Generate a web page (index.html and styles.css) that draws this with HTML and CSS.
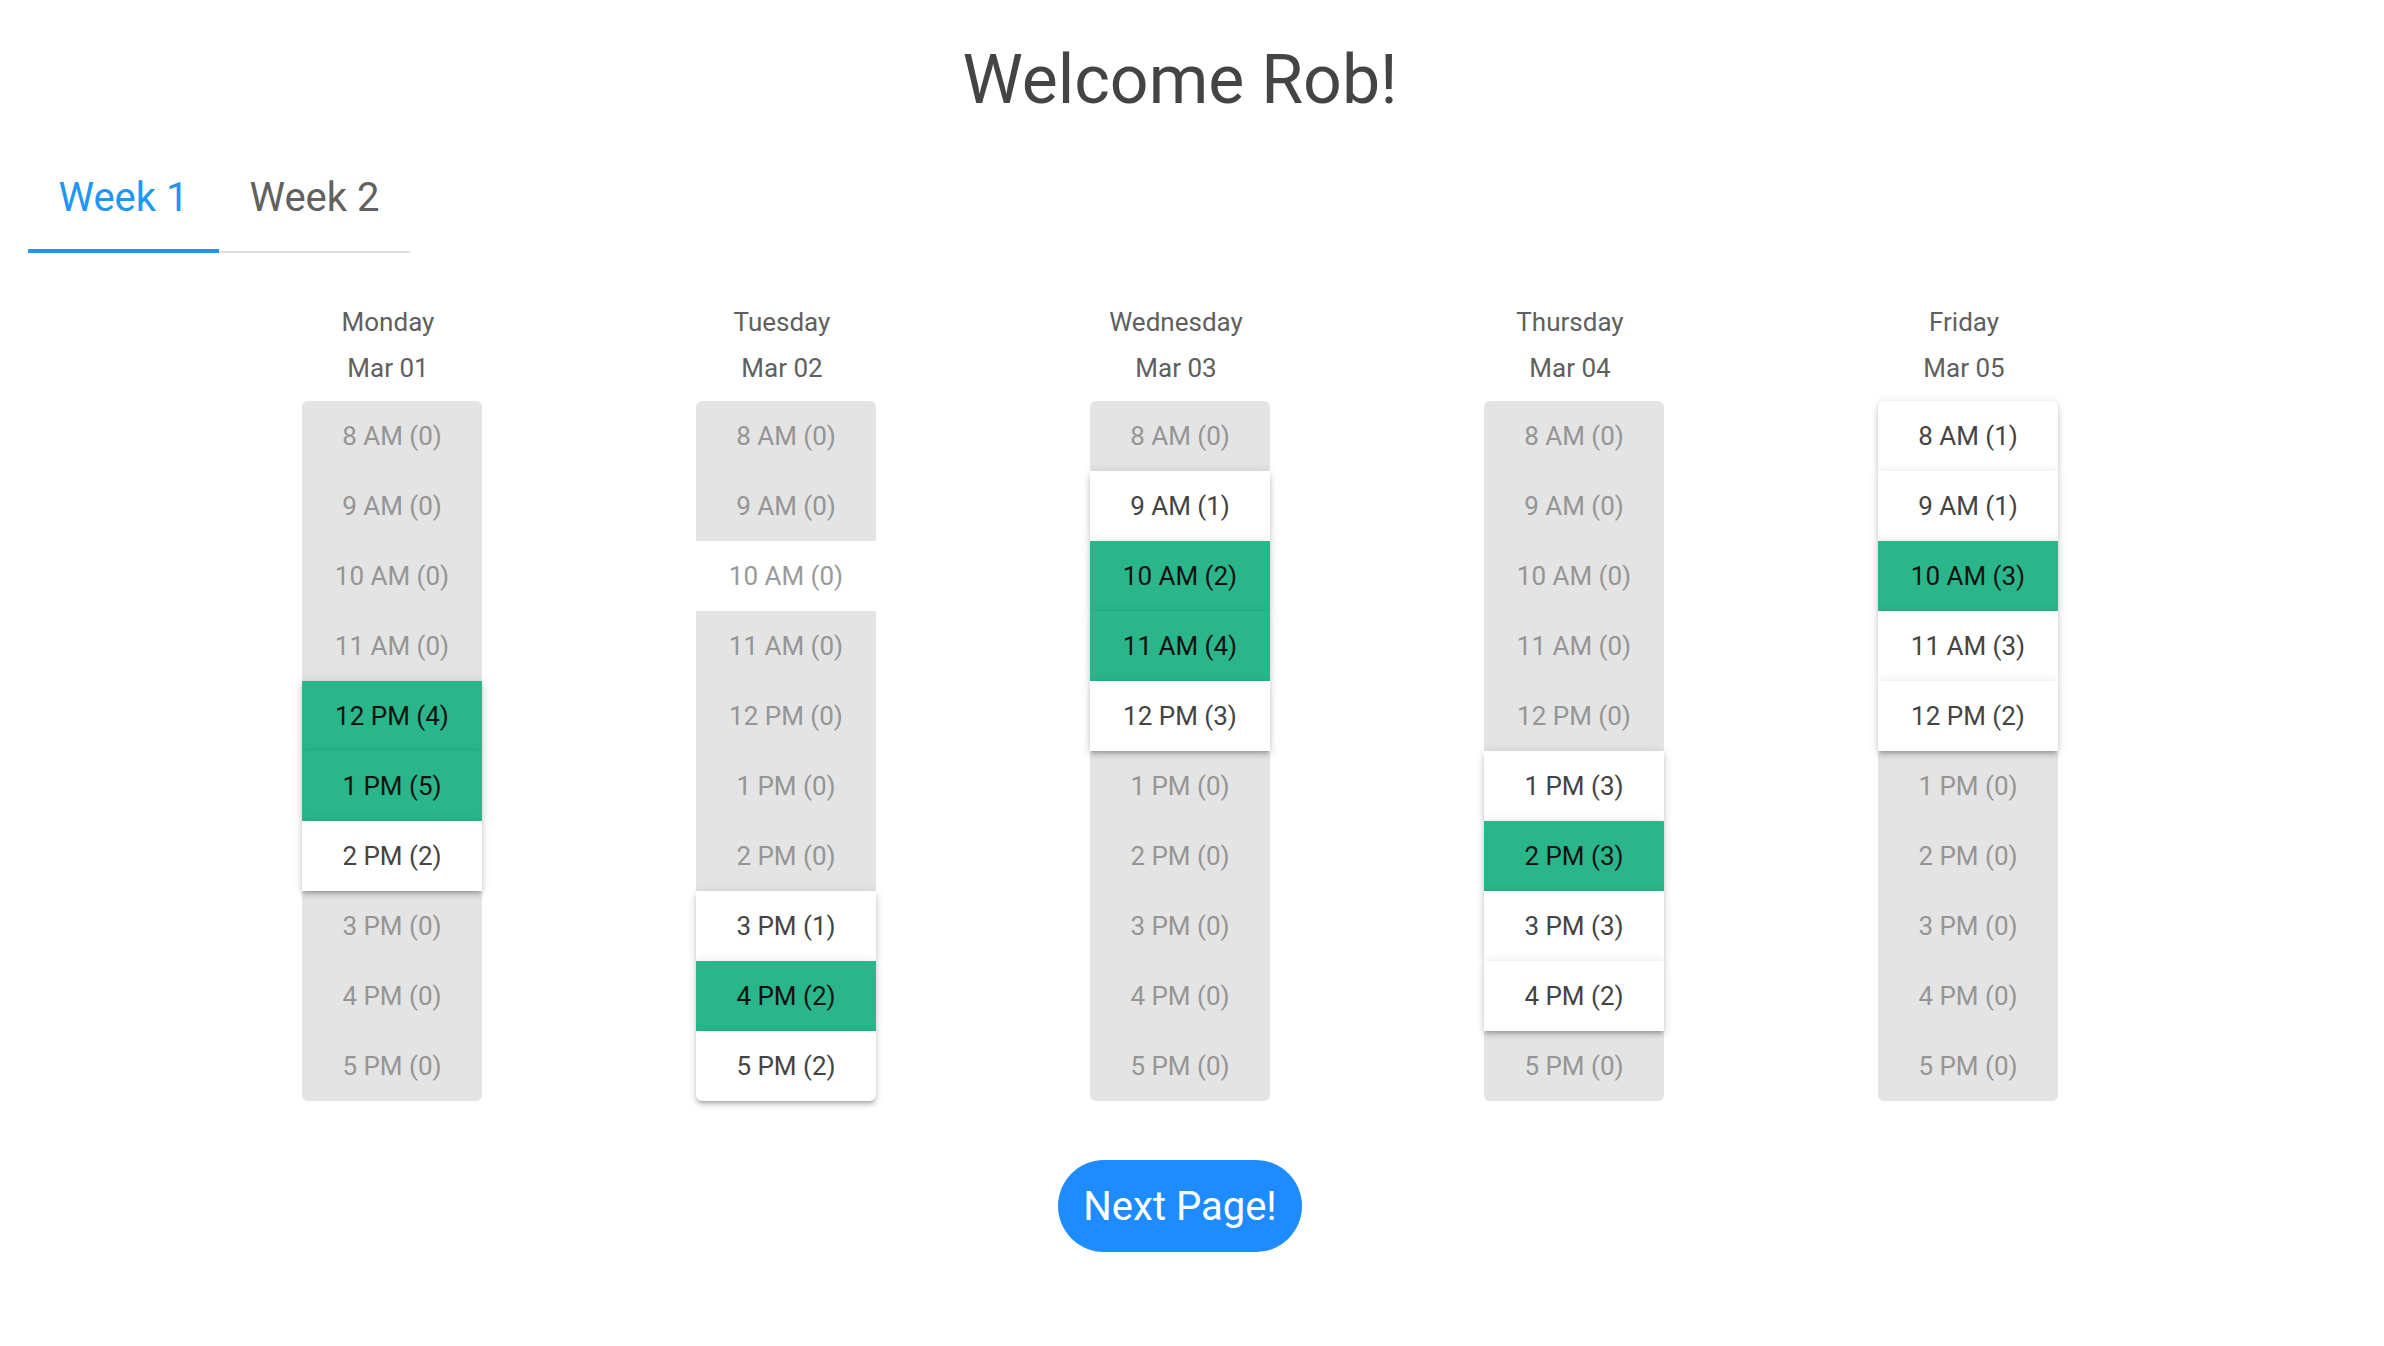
FILE: index.html
```html
<!DOCTYPE html>
<html lang="en">
<head>
<meta charset="utf-8">
<title>Welcome Rob!</title>
<link rel="stylesheet" href="styles.css">
</head>
<body>
<div class="page">
  <h1 class="title">Welcome Rob!</h1>
  <div class="tabs">
    <div class="tab active">Week 1</div>
    <div class="tab">Week 2</div>
  </div>
  <div class="days">
    <div class="day">
      <div class="day-name">Monday</div>
      <div class="day-date">Mar 01</div>
      <div class="slots">
        <div class="slot">8 AM (0)</div>
        <div class="slot">9 AM (0)</div>
        <div class="slot">10 AM (0)</div>
        <div class="slot">11 AM (0)</div>
        <div class="slot hot">12 PM (4)</div>
        <div class="slot hot">1 PM (5)</div>
        <div class="slot open">2 PM (2)</div>
        <div class="slot">3 PM (0)</div>
        <div class="slot">4 PM (0)</div>
        <div class="slot">5 PM (0)</div>
      </div>
    </div>
    <div class="day">
      <div class="day-name">Tuesday</div>
      <div class="day-date">Mar 02</div>
      <div class="slots">
        <div class="slot">8 AM (0)</div>
        <div class="slot">9 AM (0)</div>
        <div class="slot blank">10 AM (0)</div>
        <div class="slot">11 AM (0)</div>
        <div class="slot">12 PM (0)</div>
        <div class="slot">1 PM (0)</div>
        <div class="slot">2 PM (0)</div>
        <div class="slot open">3 PM (1)</div>
        <div class="slot hot">4 PM (2)</div>
        <div class="slot open">5 PM (2)</div>
      </div>
    </div>
    <div class="day">
      <div class="day-name">Wednesday</div>
      <div class="day-date">Mar 03</div>
      <div class="slots">
        <div class="slot">8 AM (0)</div>
        <div class="slot open">9 AM (1)</div>
        <div class="slot hot">10 AM (2)</div>
        <div class="slot hot">11 AM (4)</div>
        <div class="slot open">12 PM (3)</div>
        <div class="slot">1 PM (0)</div>
        <div class="slot">2 PM (0)</div>
        <div class="slot">3 PM (0)</div>
        <div class="slot">4 PM (0)</div>
        <div class="slot">5 PM (0)</div>
      </div>
    </div>
    <div class="day">
      <div class="day-name">Thursday</div>
      <div class="day-date">Mar 04</div>
      <div class="slots">
        <div class="slot">8 AM (0)</div>
        <div class="slot">9 AM (0)</div>
        <div class="slot">10 AM (0)</div>
        <div class="slot">11 AM (0)</div>
        <div class="slot">12 PM (0)</div>
        <div class="slot open">1 PM (3)</div>
        <div class="slot hot">2 PM (3)</div>
        <div class="slot open">3 PM (3)</div>
        <div class="slot open">4 PM (2)</div>
        <div class="slot">5 PM (0)</div>
      </div>
    </div>
    <div class="day">
      <div class="day-name">Friday</div>
      <div class="day-date">Mar 05</div>
      <div class="slots">
        <div class="slot open">8 AM (1)</div>
        <div class="slot open">9 AM (1)</div>
        <div class="slot hot">10 AM (3)</div>
        <div class="slot open">11 AM (3)</div>
        <div class="slot open">12 PM (2)</div>
        <div class="slot">1 PM (0)</div>
        <div class="slot">2 PM (0)</div>
        <div class="slot">3 PM (0)</div>
        <div class="slot">4 PM (0)</div>
        <div class="slot">5 PM (0)</div>
      </div>
    </div>
  </div>
  <div class="actions">
    <button class="next-btn" type="button">Next Page!</button>
  </div>
</div>
</body>
</html>
```

FILE: styles.css
```css
html, body {
  margin: 0;
  padding: 0;
  background: #ffffff;
}

body {
  font-family: Roboto, "Noto Sans", "Liberation Sans", sans-serif;
  color: #444444;
}

.page {
  width: 2360px;
}

.title {
  margin: 0;
  padding-top: 40px;
  font-size: 68px;
  line-height: 81px;
  font-weight: 400;
  text-align: center;
  color: #444444;
}

.tabs {
  display: flex;
  width: fit-content;
  margin: 53px 0 0 28px;
  border-bottom: 2px solid #dedede;
}

.tab {
  position: relative;
  width: 191px;
  padding-bottom: 29px;
  font-size: 40px;
  line-height: 48px;
  text-align: center;
  color: #616161;
}

.tab.active {
  color: #2196f3;
}

.tab.active::after {
  content: "";
  position: absolute;
  left: 0;
  right: 0;
  bottom: -2px;
  height: 4px;
  background: #2196f3;
}

.days {
  display: grid;
  grid-template-columns: repeat(5, 394px);
  justify-content: center;
  margin-top: 47px;
}

.day {
  display: flex;
  flex-direction: column;
  align-items: center;
}

.day-name,
.day-date {
  padding-right: 8px;
  font-size: 26px;
  line-height: 45.5px;
  color: #5f5f5f;
}

.slots {
  width: 180px;
  margin-top: 10px;
  background: #e4e4e4;
  border-radius: 6px;
}

.slot {
  height: 70px;
  display: flex;
  align-items: center;
  justify-content: center;
  font-size: 26px;
  color: #959595;
}

.slot:first-child {
  border-radius: 6px 6px 0 0;
}

.slot:last-child {
  border-radius: 0 0 6px 6px;
}

.slot.blank {
  background: #ffffff;
  color: #9a9a9a;
}

.slot.open,
.slot.hot {
  box-shadow: 0 3px 3px -2px rgba(0, 0, 0, 0.2),
              0 4px 5px 0 rgba(0, 0, 0, 0.14),
              0 1px 10px 0 rgba(0, 0, 0, 0.12);
}

.slot.open {
  background: #ffffff;
  color: #444444;
}

.slot.hot {
  background: #2ab68a;
  color: #111111;
}

.actions {
  display: flex;
  justify-content: center;
  margin-top: 59px;
}

.next-btn {
  width: 244px;
  height: 92px;
  border: none;
  border-radius: 46px;
  background: #1e8cff;
  color: #ffffff;
  font-family: Roboto, "Noto Sans", "Liberation Sans", sans-serif;
  font-size: 40px;
  padding: 0;
  cursor: pointer;
}
```
